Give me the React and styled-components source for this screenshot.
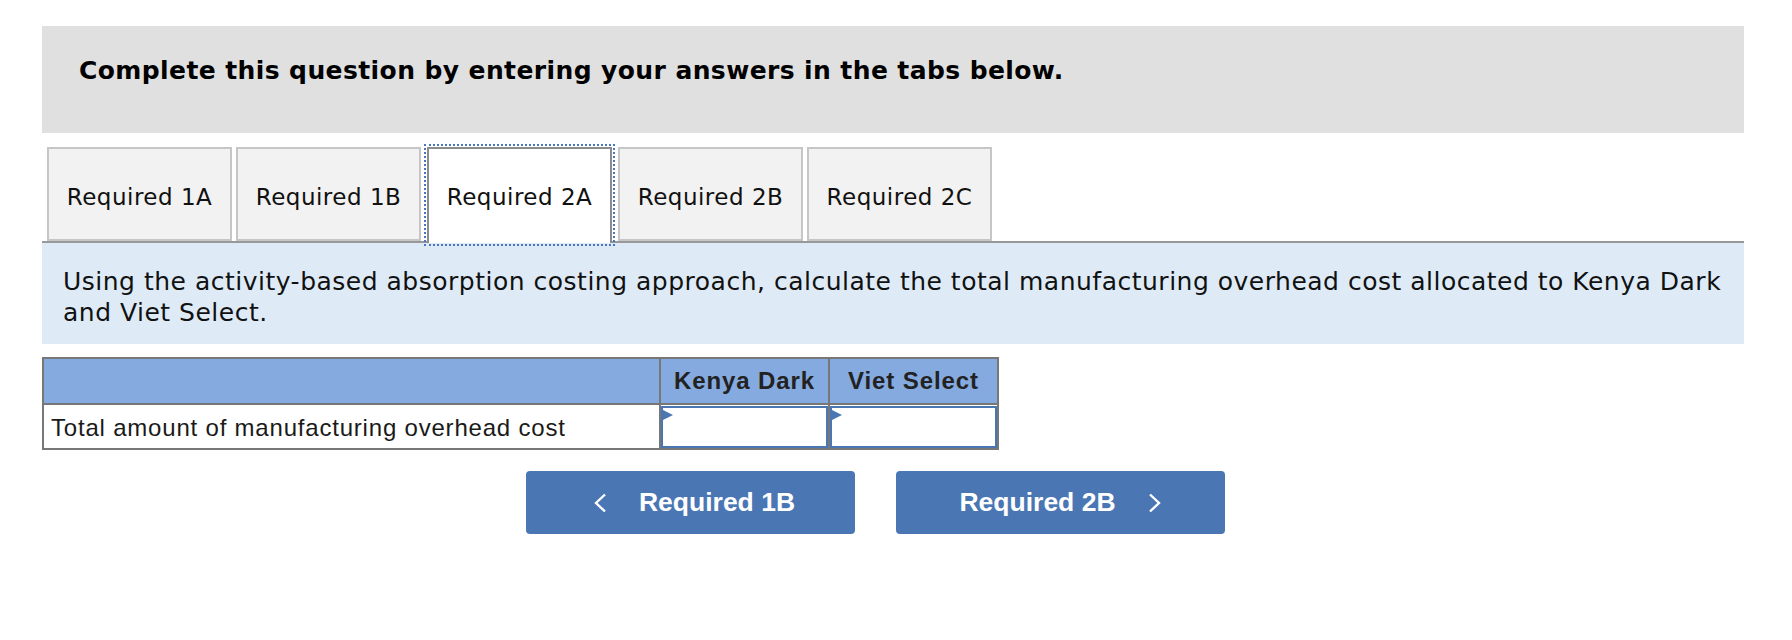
import React from "react"
import styled, { createGlobalStyle } from "styled-components"

const GlobalStyle = createGlobalStyle`
  body {
    margin: 0;
    background: #fff;
    font-family: "DejaVu Sans", Verdana, sans-serif;
    color: #000;
  }
`

const Page = styled.div`
  width: 1702px;
  padding: 26px 0 0 42px;
`

const Prompt = styled.div`
  box-sizing: border-box;
  height: 107px;
  padding: 31px 37px 0;
  background: #e0e0e0;
`

const PromptTitle = styled.div`
  font-family: "DejaVu Sans", Verdana, sans-serif;
  font-weight: bold;
  font-size: 25px;
  letter-spacing: 0.4px;
  line-height: 28px;
`

const TabBar = styled.div`
  display: flex;
  align-items: flex-start;
  gap: 4px;
  margin-top: 14px;
  padding-left: 5px;
  height: 94px;
  border-bottom: 2px solid #999;
`

const Tab = styled.div`
  box-sizing: border-box;
  width: 185px;
  height: ${(p) => (p.$active ? "96px" : "94px")};
  margin: ${(p) => (p.$active ? "0 2px" : "0")};
  padding-top: 35px;
  background: ${(p) => (p.$active ? "#fff" : "#f2f2f2")};
  border: 2px solid ${(p) => (p.$active ? "#8c8c8c" : "#c6c6c6")};
  border-bottom: ${(p) => (p.$active ? "none" : "2px solid #c6c6c6")};
  outline: ${(p) => (p.$active ? "2px dotted #4a76c0" : "none")};
  outline-offset: 1px;
  position: relative;
  z-index: ${(p) => (p.$active ? 1 : 0)};
  font-size: 23px;
  letter-spacing: 0.5px;
  line-height: 26px;
  text-align: center;
  color: #111;
`

const Instruction = styled.div`
  padding: 23px 0 16px 21px;
  background: #deebf7;
  font-size: 25px;
  letter-spacing: 0.5px;
  line-height: 31px;
  color: #111;
`

const AnswerTable = styled.table`
  margin-top: 13px;
  width: 955px;
  table-layout: fixed;
  border-collapse: collapse;
  border: 2px solid #777;
  font-family: "Liberation Sans", Arial, sans-serif;
`

const HeadCell = styled.th`
  height: 44px;
  padding: 0;
  background: #84aadf;
  border: 2px solid #777;
  font-size: 24px;
  letter-spacing: 0.9px;
  font-weight: bold;
  color: #222;
  text-align: center;
`

const LabelCell = styled.td`
  height: 40px;
  padding: 3px 0 0 7px;
  border: 2px solid #777;
  font-size: 24px;
  letter-spacing: 0.8px;
  color: #1a1a1a;
  text-align: left;
`

const InputCell = styled.td`
  padding: 0;
  border: 2px solid #777;
  position: relative;
`

const Entry = styled.div`
  box-sizing: border-box;
  height: 42px;
  border: 2px solid #4a76b4;
  background: #fff;
`

const Marker = styled.span`
  position: absolute;
  left: 0;
  top: 4px;
  width: 0;
  height: 0;
  border-top: 6.5px solid transparent;
  border-bottom: 6.5px solid transparent;
  border-left: 12px solid #4a76b4;
`

const NavRow = styled.div`
  display: flex;
  gap: 41px;
  margin-top: 21px;
  padding-left: 484px;
`

const NavButton = styled.button`
  box-sizing: border-box;
  width: 329px;
  height: 63px;
  display: flex;
  align-items: center;
  justify-content: center;
  gap: 33px;
  padding: 0 0 0 ${(p) => (p.$back ? "7px" : "0")};
  border: none;
  border-radius: 4px;
  background: #4a76b4;
  color: #fff;
  font-family: "Liberation Sans", Arial, sans-serif;
  font-weight: bold;
  font-size: 26.5px;
  cursor: pointer;
`

const Chevron = ({ dir }) => (
  <svg width="13" height="20" viewBox="0 0 13 20">
    <polyline
      points={dir === "left" ? "12,1.5 3,10 12,18.5" : "1,1.5 10,10 1,18.5"}
      fill="none"
      stroke="#fff"
      strokeWidth="2.4"
    />
  </svg>
)

const tabs = ["Required 1A", "Required 1B", "Required 2A", "Required 2B", "Required 2C"]

export default function App() {
  return (
    <Page>
      <GlobalStyle />
      <Prompt>
        <PromptTitle>Complete this question by entering your answers in the tabs below.</PromptTitle>
      </Prompt>
      <TabBar>
        {tabs.map((t) => (
          <Tab key={t} $active={t === "Required 2A"}>
            {t}
          </Tab>
        ))}
      </TabBar>
      <Instruction>
        Using the activity-based absorption costing approach, calculate the total manufacturing overhead cost allocated to
        Kenya Dark and Viet Select.
      </Instruction>
      <AnswerTable>
        <colgroup>
          <col style={{ width: 617 }} />
          <col style={{ width: 169 }} />
          <col style={{ width: 169 }} />
        </colgroup>
        <thead>
          <tr>
            <HeadCell></HeadCell>
            <HeadCell>Kenya Dark</HeadCell>
            <HeadCell>Viet Select</HeadCell>
          </tr>
        </thead>
        <tbody>
          <tr>
            <LabelCell>Total amount of manufacturing overhead cost</LabelCell>
            <InputCell>
              <Entry />
              <Marker />
            </InputCell>
            <InputCell>
              <Entry />
              <Marker />
            </InputCell>
          </tr>
        </tbody>
      </AnswerTable>
      <NavRow>
        <NavButton $back>
          <Chevron dir="left" />
          <span>Required 1B</span>
        </NavButton>
        <NavButton>
          <span>Required 2B</span>
          <Chevron dir="right" />
        </NavButton>
      </NavRow>
    </Page>
  )
}
